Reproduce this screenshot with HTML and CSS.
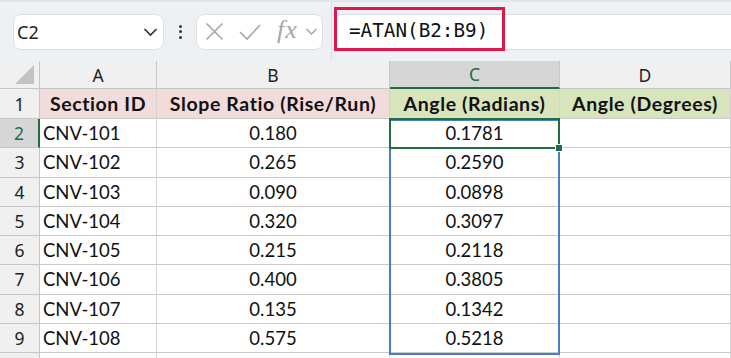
FILE: index.html
```html
<!DOCTYPE html>
<html>
<head>
<meta charset="utf-8">
<link rel="stylesheet" href="styles.css">
</head>
<body>
<div class="app">
  <div class="toolbar">
    <div class="namebox">
      <span class="name">C2</span>
      <svg class="chev" width="15" height="10" viewBox="0 0 15 10"><path d="M1.5 2 L7.5 8 L13.5 2" fill="none" stroke="#333" stroke-width="1.7"/></svg>
    </div>
    <div class="dots"><i></i><i></i><i></i></div>
    <div class="fxbox">
      <svg class="ic-x" width="19" height="19" viewBox="0 0 19 19"><path d="M1.5 1.5 L17.5 17.5 M17.5 1.5 L1.5 17.5" stroke="#a6a6a6" stroke-width="1.6" fill="none"/></svg>
      <svg class="ic-ok" width="22" height="20" viewBox="0 0 22 20"><path d="M1 10 L8 17 L21 3" stroke="#a6a6a6" stroke-width="1.6" fill="none"/></svg>
      <span class="fx">fx</span>
      <svg class="ic-dd" width="13" height="9" viewBox="0 0 13 9"><path d="M1.5 2 L6.5 7 L11.5 2" fill="none" stroke="#a6a6a6" stroke-width="1.5"/></svg>
    </div>
    <div class="fwrap">
      <div class="formula">
        <span class="ftext">=ATAN(B2:B9)</span>
      </div>
    </div>
  </div>
  <div class="sheet">
    <div class="grid">
      <div class="corner"><span class="tri"></span></div>
      <div class="ch">A</div>
      <div class="ch">B</div>
      <div class="ch sel">C</div>
      <div class="ch">D</div>

      <div class="rh">1</div>
      <div class="c hd pink">Section ID</div>
      <div class="c hd pink">Slope Ratio (Rise/Run)</div>
      <div class="c hd green">Angle (Radians)</div>
      <div class="c hd green">Angle (Degrees)</div>

      <div class="rh sel">2</div>
      <div class="c">CNV-101</div><div class="c ctr">0.180</div><div class="c ctr">0.1781</div><div class="c"></div>
      <div class="rh">3</div>
      <div class="c">CNV-102</div><div class="c ctr">0.265</div><div class="c ctr">0.2590</div><div class="c"></div>
      <div class="rh">4</div>
      <div class="c">CNV-103</div><div class="c ctr">0.090</div><div class="c ctr">0.0898</div><div class="c"></div>
      <div class="rh">5</div>
      <div class="c">CNV-104</div><div class="c ctr">0.320</div><div class="c ctr">0.3097</div><div class="c"></div>
      <div class="rh">6</div>
      <div class="c">CNV-105</div><div class="c ctr">0.215</div><div class="c ctr">0.2118</div><div class="c"></div>
      <div class="rh">7</div>
      <div class="c">CNV-106</div><div class="c ctr">0.400</div><div class="c ctr">0.3805</div><div class="c"></div>
      <div class="rh">8</div>
      <div class="c">CNV-107</div><div class="c ctr">0.135</div><div class="c ctr">0.1342</div><div class="c"></div>
      <div class="rh">9</div>
      <div class="c">CNV-108</div><div class="c ctr">0.575</div><div class="c ctr">0.5218</div><div class="c"></div>
      <div class="rh"></div>
      <div class="c"></div><div class="c"></div><div class="c"></div><div class="c"></div>
    </div>
    <div class="range"></div>
    <div class="active"><span class="handle"></span></div>
  </div>
</div>
</body>
</html>
```
FILE: styles.css
```css
* { box-sizing: border-box; }
html, body { margin: 0; padding: 0; }
body { width: 731px; height: 358px; overflow: hidden; background: #fff; }
.app { display: flex; flex-direction: column; width: 731px; height: 358px; overflow: hidden; }

.toolbar {
  height: 61px; flex: none;
  background: #eef1f4;
  display: flex; align-items: center;
  padding-left: 13px;
  border-top: 2px solid #e2e5e9;
}
.namebox {
  width: 151px; height: 36px;
  background: #fff; border: 1px solid #dcdfe3; border-radius: 8px;
  display: flex; align-items: center; justify-content: space-between;
  padding: 0 5px 0 3px;
}
.name { font-family: "Noto Sans", sans-serif; font-size: 18px; color: #222; }
.dots { width: 32px; display: flex; flex-direction: column; align-items: center; gap: 2.5px; }
.dots i { width: 3px; height: 3px; background: #333; border-radius: 50%; display: block; }
.fxbox {
  width: 127px; height: 36px;
  background: #fff; border: 1px solid #dcdfe3; border-radius: 8px;
  display: flex; align-items: center;
  padding: 0 0 0 8px;
}
.ic-ok { margin-left: 15px; }
.fx { font-family: "Liberation Serif", serif; font-style: italic; font-size: 26px; line-height: 1; color: #a6a6a6; margin: -3px 0 0 16px; letter-spacing: 1px; }
.ic-dd { margin-left: 7px; }
.fwrap {
  flex: 1; align-self: stretch;
  margin-left: 8px; padding-left: 2px;
  border-left: 1px solid #dde1e6;
  display: flex; align-items: center;
}
.formula {
  flex: 1; height: 36px;
  background: #fff; border: 1px solid #dcdfe3; border-right: none;
  border-radius: 8px 0 0 8px;
  display: flex; align-items: center;
}
.ftext {
  font-family: "DejaVu Sans Mono", monospace; font-size: 19.3px; color: #111;
  padding: 0 14px 0 12px;
  height: 44px; line-height: 41px;
  border: 3px solid #e0174a;
  margin-left: -1px; margin-top: -5px;
}

.sheet { position: relative; flex: 1; }
.grid {
  display: grid;
  grid-template-columns: 40px 117px 233px 170px 171px;
  grid-template-rows: 28px 30px repeat(8, 29.25px) 30px;
  font-family: Lato, sans-serif; font-size: 18.5px; color: #111;
}
.corner, .ch, .rh {
  background: #f0f0f0;
  border-right: 1px solid #c6c6c6; border-bottom: 1px solid #c6c6c6;
  display: flex; align-items: center; justify-content: center;
}
.corner { position: relative; }
.tri {
  position: absolute; right: 5px; bottom: 4px;
  width: 0; height: 0;
  border-left: 19px solid transparent; border-bottom: 19px solid #c2c2c2;
}
.ch { font-family: "Noto Sans", sans-serif; font-size: 17.5px; color: #222; }
.ch.sel { background: #d6d6d6; color: #1f6e43; border-bottom: 2px solid #1f6e43; }
.rh { font-family: "Noto Sans", sans-serif; font-size: 17.5px; color: #222; }
.rh.sel { background: #d6d6d6; color: #1f6e43; border-right: 2px solid #1f6e43; }
.c {
  border-right: 1px solid #d4d4d4; border-bottom: 1px solid #c9c9c9;
  display: flex; align-items: center; padding-left: 3px;
  white-space: nowrap; overflow: hidden;
}
.ctr { justify-content: center; padding-left: 0; }
.hd { font-weight: bold; font-size: 19.5px; letter-spacing: 0.6px; justify-content: center; padding-left: 0; }
.pink { background: #f2dcdb; }
.green { background: #d8e4bc; }

.range {
  position: absolute; left: 389px; top: 58px; width: 171px; height: 236px;
  border: 2px solid #4a7cc7;
}
.active {
  position: absolute; left: 389px; top: 57px; width: 171px; height: 31px;
  border: 2px solid #1f6e43;
}
.handle {
  position: absolute; right: -5px; bottom: -5px;
  width: 8px; height: 8px; background: #1f6e43; border: 1px solid #fff;
}
```
